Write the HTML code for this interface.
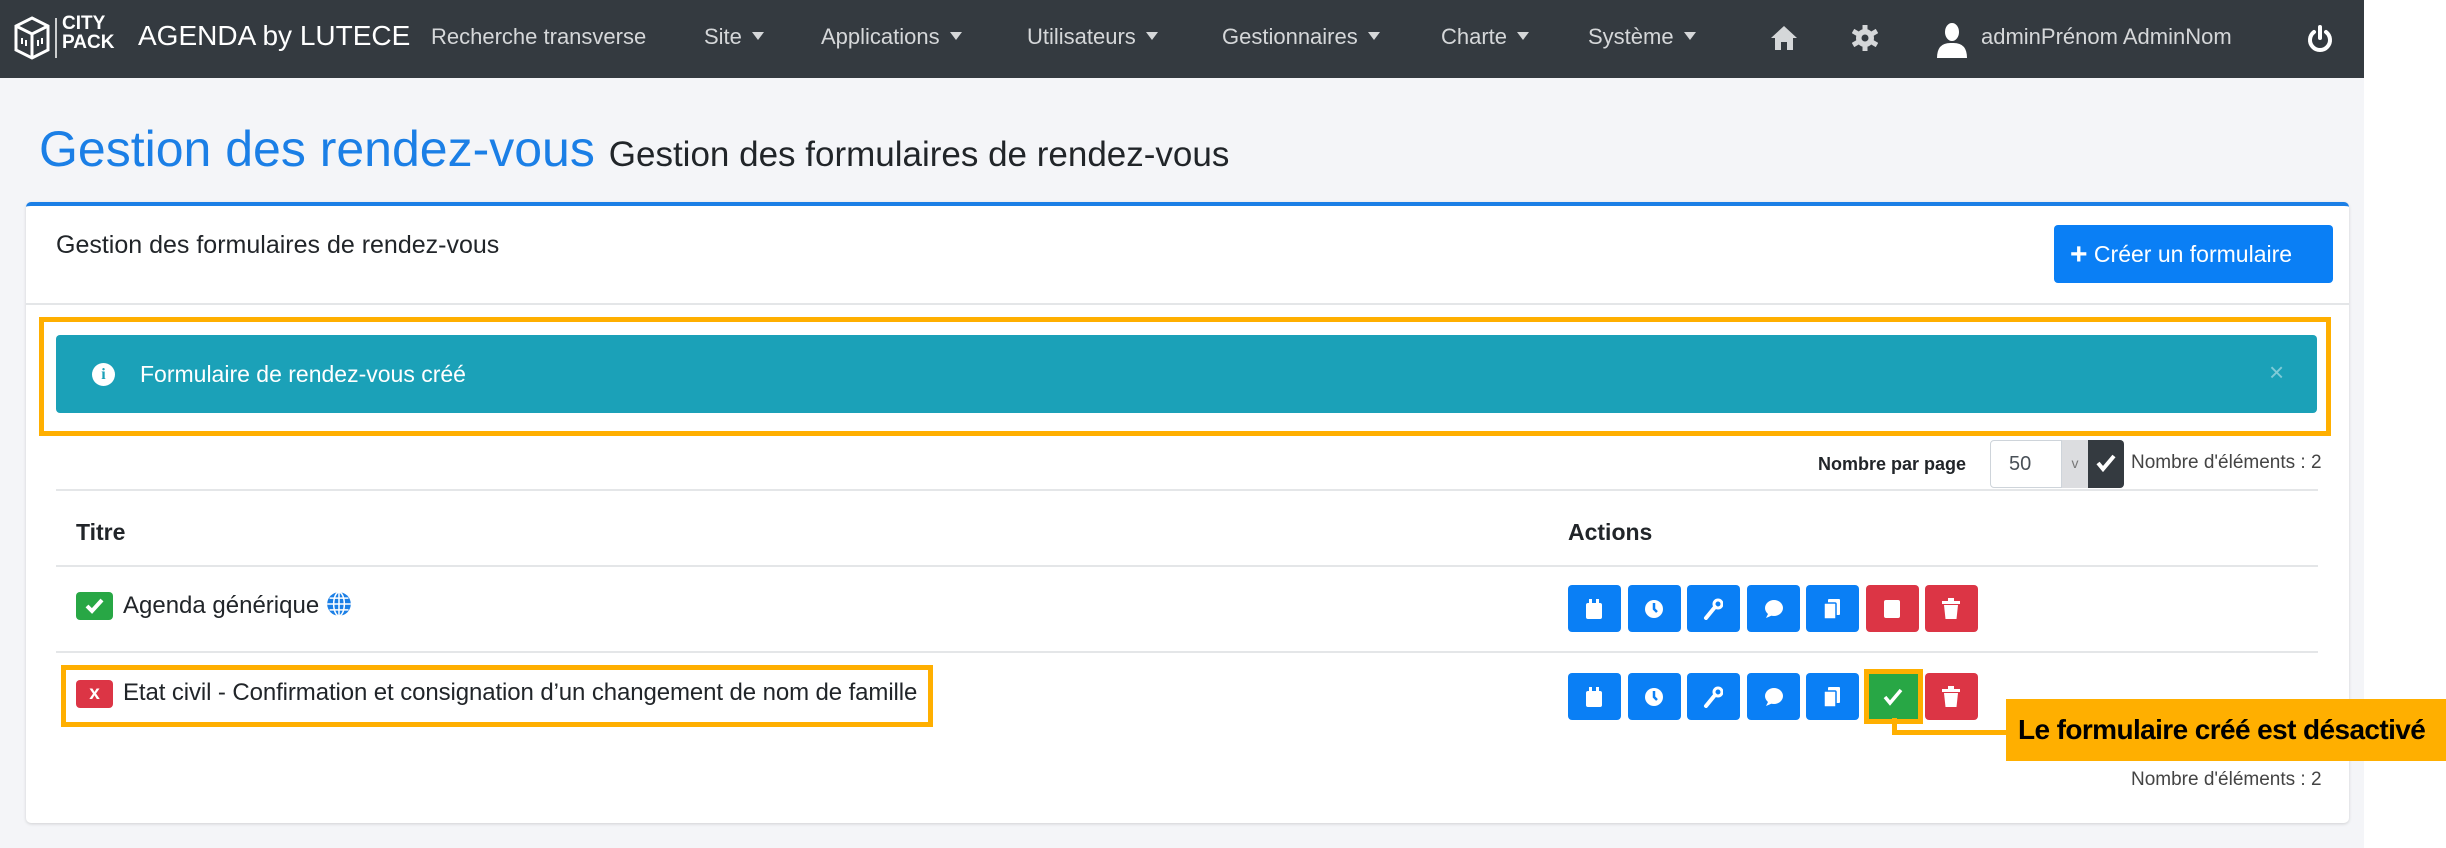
<!DOCTYPE html>
<html><head><meta charset="utf-8"><style>
*{box-sizing:border-box;margin:0;padding:0}
body{width:2446px;height:848px;background:#fff;font-family:"Liberation Sans",sans-serif;position:relative;overflow:hidden;color:#212529}
.page{position:absolute;left:0;top:0;width:2364px;height:848px;background:#f4f5f8}
.nav{position:absolute;left:0;top:0;width:2364px;height:78px;background:#343a40;color:#d5d7d9;font-size:22px}
.nav span{position:absolute;top:24px;white-space:nowrap}
.car:after{content:"";display:inline-block;margin-left:10px;border-left:6px solid transparent;border-right:6px solid transparent;border-top:8px solid #d5d7d9;vertical-align:4px}
.abs{position:absolute}
.card{position:absolute;left:26px;top:202px;width:2323px;height:621px;background:#fff;border-top:4px solid #1b7fe6;border-radius:5px;box-shadow:0 1px 3px rgba(0,0,0,.15)}
.hline{position:absolute;height:2px;background:#e4e6e8}
.btn{position:absolute;top:0;width:53px;height:47px;border-radius:4px;background:#0a7ff5}
.red{background:#dc3545}.grn{background:#28a745}
.btn svg{position:absolute;left:16px;top:13px}
</style></head><body>
<div class="page">
<div class="nav">
 <svg class="abs" style="left:12px;top:14px" width="48" height="48" viewBox="0 0 48 48" fill="none" stroke="#fff" stroke-width="3"><path d="M20 4 L36 12 L36 36 L20 44 L4 36 L4 12 Z"/><path d="M20 20 V44 M4 12 L20 20 L36 12"/><path d="M10 24v6M14 26v6M26 26v6M30 24v6" stroke-width="2"/><path d="M44 4V44" stroke-width="1.5"/></svg>
 <span style="left:62px;top:14px;font-weight:bold;font-size:19px;line-height:19px;color:#fff">CITY<br>PACK</span>
 <span style="left:138px;top:20px;font-size:28px;color:#fff">AGENDA by LUTECE</span>
 <span style="left:431px">Recherche transverse</span>
 <span class="car" style="left:704px">Site</span>
 <span class="car" style="left:821px">Applications</span>
 <span class="car" style="left:1027px">Utilisateurs</span>
 <span class="car" style="left:1222px">Gestionnaires</span>
 <span class="car" style="left:1441px">Charte</span>
 <span class="car" style="left:1588px">Système</span>
 <svg class="abs" style="left:1770px;top:24px" width="28" height="28" viewBox="0 0 28 28" fill="#d5d7d9"><path d="M14 2 L27 14 L23 14 L23 26 L17 26 L17 18 L11 18 L11 26 L5 26 L5 14 L1 14 Z"/></svg>
 <svg class="abs" style="left:1852px;top:24px" width="26" height="28" viewBox="0 0 26 28"><circle cx="13" cy="14" r="9" fill="#d5d7d9"/><path d="M13 1v26M1 7l24 14M1 21l24-14" stroke="#d5d7d9" stroke-width="5"/><circle cx="13" cy="14" r="3.5" fill="#343a40"/></svg>
 <svg class="abs" style="left:1934px;top:22px" width="36" height="36" viewBox="0 0 36 36" fill="#fff"><ellipse cx="18" cy="10" rx="7" ry="9"/><path d="M3 36 Q3 20 18 21 Q33 20 33 36Z"/></svg>
 <span style="left:1981px">adminPrénom AdminNom</span>
 <svg class="abs" style="left:2306px;top:24px" width="28" height="30" viewBox="0 0 28 30" fill="none" stroke="#fff" stroke-width="4" stroke-linecap="round"><path d="M8 8 A10 10 0 1 0 20 8"/><path d="M14 3V14"/></svg>
</div>
<div class="abs" style="left:39px;top:120px;font-size:50px;color:#1b7fe6;white-space:nowrap">Gestion des rendez-vous <span style="color:#212529;font-size:35px">Gestion des formulaires de rendez-vous</span></div>
<div class="card">
 <div class="abs" style="left:30px;top:25px;font-size:25px">Gestion des formulaires de rendez-vous</div>
 <div class="abs" style="left:2028px;top:19px;width:279px;height:58px;background:#0a7ff5;border-radius:4px;color:#fff;font-size:23px;line-height:58px;padding-left:16px;white-space:nowrap"><b style="font-size:30px;vertical-align:-2px">+</b> Créer un formulaire</div>
 <div class="hline" style="left:0;top:97px;width:2323px"></div>
 <div class="abs" style="left:13px;top:111px;width:2292px;height:119px;border:5px solid #ffaf00"></div>
 <div class="abs" style="left:30px;top:129px;width:2261px;height:78px;background:#1ba1b8;border-radius:4px;color:#fff;font-size:23px">
  <div class="abs" style="left:36px;top:28px;width:23px;height:23px;border-radius:50%;background:#fff;color:#1ba1b8;font-size:16px;font-weight:bold;text-align:center;line-height:23px;font-family:'Liberation Serif',serif">i</div>
  <div class="abs" style="left:84px;top:26px">Formulaire de rendez-vous créé</div>
  <div class="abs" style="left:2213px;top:22px;font-size:26px;color:#7fcbd7">×</div>
 </div>
 <div class="abs" style="left:1792px;top:248px;font-size:18px;font-weight:bold">Nombre par page</div>
 <div class="abs" style="left:1964px;top:234px;width:72px;height:48px;border:1px solid #ced4da;border-radius:4px 0 0 4px;font-size:20px;line-height:46px;padding-left:18px;color:#495057">50</div>
 <div class="abs" style="left:2036px;top:234px;width:26px;height:48px;background:#dcdde0;color:#777;font-size:14px;text-align:center;line-height:46px">v</div>
 <div class="abs" style="left:2062px;top:234px;width:36px;height:48px;background:#343a40;border-radius:0 4px 4px 0"><svg style="position:absolute;left:8px;top:14px" width="20" height="18" viewBox="0 0 20 18" fill="none" stroke="#fff" stroke-width="4"><path d="M2 9l5 6L18 2"/></svg></div>
 <div class="abs" style="left:2105px;top:246px;font-size:19px;color:#444">Nombre d'éléments : 2</div>
 <div class="hline" style="left:30px;top:283px;width:2262px"></div>
 <div class="abs" style="left:50px;top:313px;font-size:23px;font-weight:bold">Titre</div>
 <div class="abs" style="left:1542px;top:313px;font-size:23px;font-weight:bold">Actions</div>
 <div class="hline" style="left:30px;top:359px;width:2262px"></div>
 <div class="abs" style="left:50px;top:386px;width:37px;height:28px;background:#28a745;border-radius:4px"><svg style="position:absolute;left:9px;top:6px" width="19" height="16" viewBox="0 0 19 16" fill="none" stroke="#fff" stroke-width="4"><path d="M2 8l5 5L17 2"/></svg></div>
 <div class="abs" style="left:97px;top:385px;font-size:24px">Agenda générique <svg style="vertical-align:-4px" width="26" height="26" viewBox="0 0 22 22" fill="#1b7fe6"><circle cx="11" cy="11" r="10"/><path d="M1 11h20M11 1v20M3 6h16M3 16h16" stroke="#fff" stroke-width="1.3"/><ellipse cx="11" cy="11" rx="4.5" ry="10" fill="none" stroke="#fff" stroke-width="1.3"/></svg></div>
 <div class="abs" style="left:1542px;top:379px;height:47px;width:500px">
  <div class="btn" style="left:0"><svg width="20" height="22" viewBox="0 0 20 22" fill="#fff"><rect x="2" y="5" width="16" height="16" rx="2"/><rect x="5" y="1" width="3" height="6"/><rect x="12" y="1" width="3" height="6"/></svg></div>
  <div class="btn" style="left:60px"><svg width="20" height="22" viewBox="0 0 20 22"><circle cx="10" cy="11" r="9" fill="#fff"/><path d="M10 5v6l3 3" stroke="#0a7ff5" stroke-width="2.5" fill="none"/></svg></div>
  <div class="btn" style="left:119px"><svg width="20" height="22" viewBox="0 0 20 22" fill="none" stroke="#fff" stroke-width="4" stroke-linecap="round"><path d="M3 20L12 9"/><circle cx="15" cy="6" r="4" stroke-width="3"/></svg></div>
  <div class="btn" style="left:179px"><svg width="20" height="22" viewBox="0 0 20 22" fill="#fff"><ellipse cx="11" cy="10" rx="9" ry="8"/><path d="M3 20l3-6 4 3z"/></svg></div>
  <div class="btn" style="left:238px"><svg width="20" height="22" viewBox="0 0 20 22" fill="#fff"><rect x="6" y="1" width="12" height="16" rx="1"/><rect x="2" y="5" width="12" height="16" rx="1" stroke="#0a7ff5" stroke-width="1.5"/></svg></div>
  <div class="btn red" style="left:298px"><svg width="20" height="22" viewBox="0 0 20 22" fill="#fff"><rect x="2" y="2" width="16" height="18" rx="2"/></svg></div>
  <div class="btn red" style="left:357px"><svg width="20" height="22" viewBox="0 0 20 22" fill="#fff"><rect x="1" y="3" width="18" height="3"/><rect x="7" y="0" width="6" height="3"/><path d="M3 7h14l-1.5 14h-11z"/></svg></div>
 </div>
 <div class="hline" style="left:30px;top:445px;width:2262px"></div>
 <div class="abs" style="left:35px;top:459px;width:872px;height:62px;border:5px solid #ffaf00"></div>
 <div class="abs" style="left:50px;top:474px;width:37px;height:28px;background:#dc3545;border-radius:4px;color:#fff;font-weight:bold;font-size:19px;text-align:center;line-height:28px">x</div>
 <div class="abs" style="left:97px;top:473px;font-size:24px;white-space:nowrap;letter-spacing:-0.1px">Etat civil - Confirmation et consignation d’un changement de nom de famille</div>
 <div class="abs" style="left:1542px;top:467px;height:47px;width:500px">
  <div class="btn" style="left:0"><svg width="20" height="22" viewBox="0 0 20 22" fill="#fff"><rect x="2" y="5" width="16" height="16" rx="2"/><rect x="5" y="1" width="3" height="6"/><rect x="12" y="1" width="3" height="6"/></svg></div>
  <div class="btn" style="left:60px"><svg width="20" height="22" viewBox="0 0 20 22"><circle cx="10" cy="11" r="9" fill="#fff"/><path d="M10 5v6l3 3" stroke="#0a7ff5" stroke-width="2.5" fill="none"/></svg></div>
  <div class="btn" style="left:119px"><svg width="20" height="22" viewBox="0 0 20 22" fill="none" stroke="#fff" stroke-width="4" stroke-linecap="round"><path d="M3 20L12 9"/><circle cx="15" cy="6" r="4" stroke-width="3"/></svg></div>
  <div class="btn" style="left:179px"><svg width="20" height="22" viewBox="0 0 20 22" fill="#fff"><ellipse cx="11" cy="10" rx="9" ry="8"/><path d="M3 20l3-6 4 3z"/></svg></div>
  <div class="btn" style="left:238px"><svg width="20" height="22" viewBox="0 0 20 22" fill="#fff"><rect x="6" y="1" width="12" height="16" rx="1"/><rect x="2" y="5" width="12" height="16" rx="1" stroke="#0a7ff5" stroke-width="1.5"/></svg></div>
  <div class="btn grn" style="left:296px;top:-4px;width:59px;height:55px;border:5px solid #ffaf00;border-radius:0"><svg style="left:14px;top:14px" width="20" height="18" viewBox="0 0 20 18" fill="none" stroke="#fff" stroke-width="3.5"><path d="M2 9l5 6L18 2"/></svg></div>
  <div class="btn red" style="left:357px"><svg width="20" height="22" viewBox="0 0 20 22" fill="#fff"><rect x="1" y="3" width="18" height="3"/><rect x="7" y="0" width="6" height="3"/><path d="M3 7h14l-1.5 14h-11z"/></svg></div>
 </div>
 <div class="abs" style="left:2105px;top:563px;font-size:19px;color:#444">Nombre d'éléments : 2</div>
</div>
</div>
<div class="abs" style="left:1892px;top:718px;width:5px;height:17px;background:#ffaf00"></div>
<div class="abs" style="left:1892px;top:730px;width:116px;height:5px;background:#ffaf00"></div>
<div class="abs" style="left:2006px;top:699px;width:440px;height:62px;background:#ffaf00;color:#000;font-weight:bold;font-size:28px;line-height:62px;padding-left:12px;white-space:nowrap;letter-spacing:-0.6px">Le formulaire créé est désactivé</div>
</body></html>
